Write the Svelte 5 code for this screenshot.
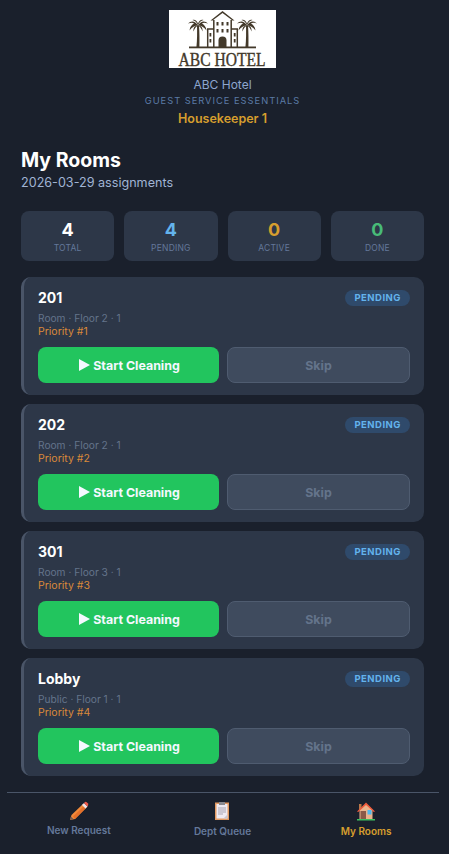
<script>
  const stats = [
    { value: 4, label: 'TOTAL', color: '#ffffff' },
    { value: 4, label: 'PENDING', color: '#63b3ed' },
    { value: 0, label: 'ACTIVE', color: '#d69e2e' },
    { value: 0, label: 'DONE', color: '#48bb78' }
  ];

  const rooms = [
    { name: '201', meta: 'Room · Floor 2 · 1', priority: 1 },
    { name: '202', meta: 'Room · Floor 2 · 1', priority: 2 },
    { name: '301', meta: 'Room · Floor 3 · 1', priority: 3 },
    { name: 'Lobby', meta: 'Public · Floor 1 · 1', priority: 4 }
  ];
</script>

<div class="app">
  <header class="brand">
    <div class="logo">
      <svg width="107" height="41" viewBox="0 0 107 41">
        <defs>
          <g id="palm">
            <path d="M-1.600 22 C-0.800 14 -0.800 7 -1 0 L1 0 C1.500 7 1.600 14 1.400 22 Z" />
            <path d="M0 0 C-3 -5 -7 -5 -10 -2 C-7 -3 -5 -3 -4 -2 C-6 -1 -8 1 -8.500 5 C-6 1.500 -3 0 0 0 Z" />
            <path d="M0 0 C3 -5 7 -5 10 -2 C7 -3 5 -3 4 -2 C6 -1 8 1 8.500 5 C6 1.500 3 0 0 0 Z" />
            <path d="M0 0 C-1 -3 -3 -5 -5.500 -5.500 C-3.500 -6.500 -1 -5 0 -2 C1 -5 3.500 -6.500 5.500 -5.500 C3 -5 1 -3 0 0 Z" />
            <path d="M0 0 C-3 0 -5 2 -4.500 6 C-3.500 3 -2 1 0 0 C2 1 3.500 3 4.500 6 C5 2 3 0 0 0 Z" />
          </g>
        </defs>
        <g fill="#43392a">
          <path d="M41.500 10.500 L53.500 1 L65.500 10.500 L63.500 10.500 L53.500 3 L43.500 10.500 Z" />
          <path d="M44.800 10v27 M62.200 10v27 M38.700 19v18 M68.300 19v18 M38 19h6.500 M62.500 19h6.500" fill="none" stroke="#43392a" stroke-width="1.500" />
          <rect x="20" y="36.500" width="67" height="1.800" />
          <rect x="47.500" y="12" width="2" height="3.500" /><rect x="52.500" y="12" width="2" height="3.500" /><rect x="57.500" y="12" width="2" height="3.500" />
          <rect x="47.500" y="19" width="2" height="3.500" /><rect x="52.500" y="19" width="2" height="3.500" /><rect x="57.500" y="19" width="2" height="3.500" />
          <path d="M49.500 37v-6.500a4 4 0 0 1 8 0V37z" />
          <rect x="40.500" y="23" width="1.800" height="3.500" /><rect x="40.500" y="29" width="1.800" height="3.500" />
          <rect x="64.800" y="23" width="1.800" height="3.500" /><rect x="64.800" y="29" width="1.800" height="3.500" />
          <use href="#palm" x="29" y="15.500" />
          <use href="#palm" x="78" y="15.500" />
        </g>
      </svg>
      <span class="logo-text">ABC HOTEL</span>
    </div>
    <div class="hotel">ABC Hotel</div>
    <div class="tag">GUEST SERVICE ESSENTIALS</div>
    <div class="user">Housekeeper 1</div>
  </header>

  <main class="content">
    <h1>My Rooms</h1>
    <p class="date">2026-03-29 assignments</p>

    <div class="stats">
      {#each stats as s}
        <div class="stat">
          <div class="num" style={`color: ${s.color}`}>{s.value}</div>
          <div class="lbl">{s.label}</div>
        </div>
      {/each}
    </div>

    <div class="rooms">
      {#each rooms as r}
        <section class="room">
          <div class="room-head">
            <span class="room-name">{r.name}</span>
            <span class="badge">PENDING</span>
          </div>
          <div class="meta">{r.meta}</div>
          <div class="priority">Priority #{r.priority}</div>
          <div class="actions">
            <button class="start">
              <svg width="11" height="12" viewBox="0 0 11 12"><path d="M0 0 L11 6 L0 12 Z" fill="#f4f8ff" /></svg>
              Start Cleaning
            </button>
            <button class="skip">Skip</button>
          </div>
        </section>
      {/each}
    </div>
  </main>

  <nav class="nav">
    <div class="tab">
      <svg class="ico" width="20" height="20" viewBox="0 0 20 20">
        <path d="M1 19 L2.500 14 L14 3 L17.500 6.500 L6 18 Z" fill="#f28a3a" />
        <path d="M4 15.500 L15.500 4.500 L17.500 6.500 L6 18 Z" fill="#e4702a" />
        <path d="M1 19 L2 15.500 L4.500 18 Z" fill="#6d5a55" />
        <path d="M13 4 L15 2 L18.500 5.500 L16.500 7.500 Z" fill="#f1e3e6" />
        <path d="M15 2 L16 1 Q17 0.500 18 1.500 L19 2.500 Q19.500 3.500 19 4.500 L18.500 5.500 Z" fill="#f2594b" />
      </svg>
      <span>New Request</span>
    </div>
    <div class="tab low">
      <svg class="ico" width="20" height="20" viewBox="0 0 20 20">
        <rect x="3" y="1.500" width="14" height="17.500" fill="#e39a62" />
        <rect x="4.500" y="3" width="11" height="14.500" fill="#eeeaf2" />
        <rect x="7" y="1" width="6" height="3" fill="#8a8a90" />
        <path d="M6 7h8M6 9h8M6 11h8M6 13h5" stroke="#a9a6b4" stroke-width="1" />
        <path d="M11.500 17.500 L15.500 13.500 V17.500 Z" fill="#c9c5cf" />
      </svg>
      <span>Dept Queue</span>
    </div>
    <div class="tab low active">
      <svg class="ico" width="20" height="20" viewBox="0 0 20 20">
        <rect x="3" y="3" width="2.500" height="6" fill="#b9784a" />
        <path d="M3.500 9 L10 3 L16.500 9 V18 H3.500 Z" fill="#eab48c" />
        <path d="M1 10.500 L10 1.500 L19 10.500 L17.800 11 L10 4 L2.200 11 Z" fill="#ef5a3c" />
        <rect x="4.500" y="10" width="5.500" height="8" fill="#8a5a48" />
        <rect x="11.500" y="9" width="4" height="4.500" fill="#4fb8ee" />
        <rect x="1" y="18" width="18" height="1.500" fill="#3cc060" />
      </svg>
      <span>My Rooms</span>
    </div>
  </nav>
</div>

<style>
  :global(body) {
    background: #1a202c;
    font-family: "Inter", "Noto Sans", sans-serif;
  }

  .app {
    width: 432px;
    height: 854px;
    margin-left: 7px;
    display: flex;
    flex-direction: column;
    overflow: hidden;
  }

  .brand {
    display: flex;
    flex-direction: column;
    align-items: center;
    padding: 10px 1px 0 0;
  }

  .logo {
    width: 107px;
    height: 58px;
    background: #fff;
    display: flex;
    flex-direction: column;
    align-items: center;
  }

  .logo svg {
    display: block;
    flex: none;
  }

  .logo-text {
    font-family: "Liberation Serif", serif;
    font-size: 19px;
    line-height: 17px;
    color: #43392a;
    -webkit-text-stroke: 0.4px #43392a;
    white-space: nowrap;
    transform: scaleX(0.82);
  }

  .hotel {
    margin-top: 10px;
    font-size: 12px;
    line-height: 14px;
    color: #8ea6cf;
  }

  .tag {
    margin-top: 3px;
    font-size: 9.300px;
    line-height: 12px;
    letter-spacing: 1px;
    color: #5a7ba6;
  }

  .user {
    margin-top: 4px;
    font-size: 12.500px;
    line-height: 16px;
    font-weight: 600;
    color: #d69e2e;
  }

  .content {
    flex: 1;
    padding: 0 15px 0 14px;
  }

  h1 {
    margin: 20px 0 0;
    font-size: 19.500px;
    line-height: 26px;
    font-weight: 700;
    color: #fff;
  }

  .date {
    margin: 2px 0 0;
    font-size: 12.600px;
    line-height: 16px;
    color: #a0b4d4;
  }

  .stats {
    display: grid;
    grid-template-columns: repeat(4, 1fr);
    gap: 10px;
    margin-top: 20px;
  }

  .stat {
    height: 50px;
    box-sizing: border-box;
    background: #2d3748;
    border-radius: 8px;
    text-align: center;
    padding-top: 8px;
  }

  .num {
    font-size: 18px;
    line-height: 22px;
    font-weight: 700;
  }

  .lbl {
    margin-top: 2px;
    font-size: 8.500px;
    line-height: 11px;
    letter-spacing: 0.2px;
    color: #64789a;
  }

  .rooms {
    display: flex;
    flex-direction: column;
    gap: 9px;
    margin-top: 16px;
  }

  .room {
    height: 118px;
    box-sizing: border-box;
    background: #2d3748;
    border-left: 3px solid #4a5568;
    border-radius: 10px;
    padding: 12px 14px 0;
  }

  .room-head {
    display: flex;
    justify-content: space-between;
    align-items: center;
    height: 16px;
  }

  .room-name {
    font-size: 14px;
    font-weight: 700;
    color: #fff;
  }

  .badge {
    background: #2f4a6b;
    color: #63b3ed;
    font-size: 9.500px;
    font-weight: 700;
    line-height: 16px;
    letter-spacing: 0.5px;
    padding: 0 9px;
    border-radius: 8px;
    margin-top: 1px;
  }

  .meta {
    margin-top: 6px;
    font-size: 10.200px;
    line-height: 14px;
    color: #64748b;
  }

  .priority {
    font-size: 10.500px;
    line-height: 14px;
    color: #d9893a;
  }

  .actions {
    display: grid;
    grid-template-columns: 181fr 183fr;
    gap: 8px;
    margin-top: 8px;
  }

  button {
    height: 36px;
    border-radius: 8px;
    font-family: inherit;
    font-size: 12.400px;
    font-weight: 700;
    padding: 0;
  }

  .start {
    background: #22c55e;
    border: none;
    color: #f4f8ff;
    display: flex;
    align-items: center;
    justify-content: center;
    gap: 3px;
    padding-left: 2px;
  }

  .skip {
    background: #3f4b5e;
    border: 1px solid #4f5c70;
    color: #64748b;
  }

  .nav {
    flex: none;
    height: 62px;
    border-top: 1px solid #4a5568;
    display: grid;
    grid-template-columns: repeat(3, 1fr);
    padding-right: 1px;
    box-sizing: border-box;
  }

  .tab {
    display: flex;
    flex-direction: column;
    align-items: center;
    padding-top: 8px;
    font-size: 10px;
    line-height: 12px;
    font-weight: 600;
    color: #64789a;
  }

  .ico {
    display: block;
    margin-bottom: 3px;
  }

  .low .ico {
    margin-bottom: 4px;
  }

  .active {
    color: #d69e2e;
  }
</style>
